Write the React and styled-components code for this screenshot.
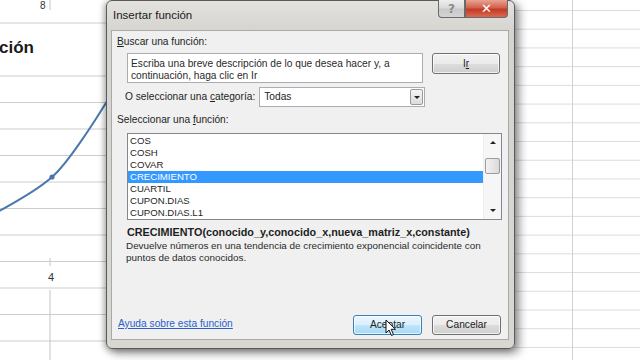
import React from 'react';
import styled, { createGlobalStyle } from 'styled-components';

const GlobalStyle = createGlobalStyle`
  html, body {
    margin: 0;
    padding: 0;
  }
  body {
    width: 640px;
    height: 360px;
    overflow: hidden;
    background: #fff;
    font-family: "Liberation Sans", Arial, sans-serif;
    color: #1e1e1e;
  }
`;

const Screen = styled.div`
  position: relative;
  display: flex;
  width: 640px;
  height: 360px;
  overflow: hidden;
  background: #fff;
`;

const ChartArea = styled.div`
  flex: none;
  width: 330px;
  height: 360px;
`;

const Cells = styled.div`
  flex: 1;
  height: 360px;
  background-image: linear-gradient(to right, #d2d2d2 1px, transparent 1px),
    linear-gradient(#dcdcdc 1px, transparent 1px);
  background-size: 1px 100%, 100% 18.72px;
  background-position: 242px 0, 0 10px;
  background-repeat: no-repeat, repeat;
`;

/* dialog */

const Dialog = styled.div`
  position: absolute;
  left: 106px;
  top: 0;
  width: 409px;
  height: 349px;
  box-sizing: border-box;
  display: flex;
  flex-direction: column;
  padding: 0 5px 8px 4px;
  border: 1px solid #5a5a5a;
  border-radius: 6px;
  background: linear-gradient(#e4e2de, #d6d4cf 30px, #d9d7d2);
  box-shadow: 4px 4px 10px rgba(0, 0, 0, 0.45), -2px 1px 6px rgba(0, 0, 0, 0.28);
`;

const TitleBar = styled.div`
  display: flex;
  align-items: flex-start;
  height: 29px;
  padding-left: 2px;
`;

const Title = styled.div`
  flex: 1;
  padding-top: 7px;
  font-size: 11.5px;
  line-height: 14px;
  color: #1a1a1a;
`;

const CaptionButton = styled.div`
  display: flex;
  align-items: center;
  justify-content: center;
  width: ${(p) => p.$w}px;
  height: 18px;
  margin-top: -1px;
  box-sizing: border-box;
  border: 1px solid #6a6a6a;
  border-top: none;
  border-radius: ${(p) => (p.$close ? '0 0 4px 0' : '0 0 0 4px')};
  background: ${(p) =>
    p.$close
      ? 'linear-gradient(#e9a393, #d2614d 45%, #c43a25 55%, #d86a52)'
      : 'linear-gradient(#eeeeee, #dadada 45%, #c9c9c9 55%, #d4d4d4)'};
  color: ${(p) => (p.$close ? '#fff' : '#8a8a8a')};
  font-size: ${(p) => (p.$close ? 13 : 12)}px;
  font-weight: bold;
  line-height: 1;
  font-family: "DejaVu Sans", sans-serif;
  &:last-child {
    margin-right: 1px;
  }
`;

const Panel = styled.div`
  flex: 1;
  display: flex;
  flex-direction: column;
  border: 1px solid #a9a9a9;
  background: #f0f0f0;
  padding: 0 7px 4px 0;
  font-size: 10.2px;
  line-height: 12px;
`;

const Label = styled.div`
  margin: ${(p) => p.$top}px 0 0 ${(p) => p.$left}px;
  height: 12px;
  white-space: nowrap;
`;

const Key = styled.span`
  text-decoration: underline;
`;

const SearchRow = styled.div`
  display: flex;
  align-items: flex-start;
  gap: 9px;
  margin: 5px 0 0 15px;
`;

const SearchBox = styled.div`
  width: 296px;
  height: 30px;
  box-sizing: border-box;
  padding: 4px 3px;
  border: 1px solid #abadb3;
  background: #fff;
  color: #2a2a2a;
`;

const Button = styled.div`
  position: relative;
  display: flex;
  align-items: center;
  justify-content: center;
  width: ${(p) => p.$w || 69}px;
  height: ${(p) => p.$h || 20}px;
  box-sizing: border-box;
  border: 1px solid ${(p) => (p.$default ? '#3c7fb1' : '#707070')};
  border-radius: 3px;
  background: ${(p) =>
    p.$default
      ? 'linear-gradient(#eaf6fd, #d9f0fc 50%, #bee6fd 50%, #a7d9f5)'
      : 'linear-gradient(#f2f2f2, #ebebeb 50%, #dddddd 50%, #cfcfcf)'};
  box-shadow: inset 0 0 0 1px rgba(255, 255, 255, 0.7);
  color: #1e1e1e;
`;

const CategoryRow = styled.div`
  display: flex;
  align-items: center;
  gap: 4px;
  margin: 4px 0 0 13px;
`;

const Select = styled.div`
  display: flex;
  align-items: center;
  width: 166px;
  height: 20px;
  box-sizing: border-box;
  padding: 0 1px 0 4px;
  border: 1px solid #abadb3;
  background: #fff;
`;

const SelectValue = styled.span`
  flex: 1;
`;

const DropButton = styled.div`
  display: flex;
  align-items: center;
  justify-content: center;
  width: 13px;
  height: 16px;
  box-sizing: border-box;
  border: 1px solid #9a9a9a;
  border-radius: 2px;
  background: linear-gradient(#f4f4f4, #dcdcdc);
`;

const Arrow = styled.span`
  width: 0;
  height: 0;
  border-left: 3px solid transparent;
  border-right: 3px solid transparent;
  ${(p) => (p.$up ? 'border-bottom' : 'border-top')}: 3px solid #222;
`;

const ListBox = styled.div`
  display: flex;
  width: 375px;
  height: 87px;
  box-sizing: border-box;
  margin: 7px 0 0 15px;
  border: 1px solid #828790;
  background: #fff;
`;

const Items = styled.div`
  flex: 1;
  padding-top: 1px;
  font-size: 9.6px;
`;

const Item = styled.div`
  height: 12px;
  line-height: 12px;
  padding-left: 2px;
  background: ${(p) => (p.$selected ? '#3399ff' : 'transparent')};
  color: ${(p) => (p.$selected ? '#fff' : '#1e1e1e')};
`;

const ScrollBar = styled.div`
  display: flex;
  flex-direction: column;
  width: 17px;
  background: #f6f6f6;
  border-left: 1px solid #eeeeee;
`;

const ScrollArrow = styled.div`
  display: flex;
  align-items: center;
  justify-content: center;
  height: 17px;
`;

const Track = styled.div`
  flex: 1;
  padding-top: ${(p) => p.$offset}px;
`;

const Thumb = styled.div`
  height: 14px;
  margin: 0 1px;
  border: 1px solid #9c9c9c;
  border-radius: 2px;
  background: linear-gradient(to right, #f2f2f2, #dadada);
`;

const Syntax = styled.div`
  margin: 6px 0 0 15px;
  font-size: 10.8px;
  font-weight: bold;
  white-space: nowrap;
`;

const Description = styled.div`
  margin: 2px 0 0 14px;
  color: #2a2a2a;
  font-size: 9.9px;
  white-space: nowrap;
`;

const Footer = styled.div`
  display: flex;
  align-items: center;
  gap: 10px;
  margin-top: auto;
  padding-left: 6px;
`;

const HelpLink = styled.a`
  flex: 1;
  color: #2a5fc9;
  text-decoration: underline;
  margin-top: -2px;
`;

const Cursor = styled.svg`
  position: absolute;
  left: 31px;
  top: 3px;
`;

const functions = ['COS', 'COSH', 'COVAR', 'CRECIMIENTO', 'CUARTIL', 'CUPON.DIAS', 'CUPON.DIAS.L1'];

const gridY = [23, 76, 102.5, 129, 155.5, 182, 208.5, 235, 261.5, 288, 314.5, 341];

function Chart() {
  return (
    <svg width="330" height="360" viewBox="0 0 330 360">
      {gridY.map((y) => (
        <line key={y} x1="0" x2="330" y1={y} y2={y} stroke="#cdcdcd" strokeWidth="1.2" />
      ))}
      <line x1="50" x2="50" y1="0" y2="10" stroke="#c4c4c4" />
      <line x1="50" x2="50" y1="258" y2="266" stroke="#c4c4c4" />
      <line x1="50" x2="50" y1="290" y2="360" stroke="#c4c4c4" />
      <text x="40" y="9" fontFamily="Liberation Sans, Arial, sans-serif" fontSize="10" fill="#333">8</text>
      <text x="48" y="281" fontFamily="Liberation Sans, Arial, sans-serif" fontSize="11" fill="#333">4</text>
      <text x="-1" y="53" fontFamily="Liberation Sans, Arial, sans-serif" fontSize="17" fontWeight="bold" fill="#1a1a1a">ción</text>
      <path
        d="M -10 216 C 20 200, 40 188, 52 177 C 65 166, 90 130, 115 88"
        fill="none"
        stroke="#4a78ad"
        strokeWidth="2"
      />
      <circle cx="52" cy="177" r="2.6" fill="#4a78ad" />
    </svg>
  );
}

export default function App() {
  return (
    <Screen>
      <GlobalStyle />
      <ChartArea>
        <Chart />
      </ChartArea>
      <Cells />

      <Dialog>
        <TitleBar>
          <Title>Insertar función</Title>
          <CaptionButton $w={27}>?</CaptionButton>
          <CaptionButton $w={43} $close>✕</CaptionButton>
        </TitleBar>

        <Panel>
          <Label $top={5} $left={5}>
            <Key>B</Key>uscar una función:
          </Label>

          <SearchRow>
            <SearchBox>
              Escriba una breve descripción de lo que desea hacer y, a continuación, haga clic en Ir
            </SearchBox>
            <Button $w={68} $h={21}>
              I<Key>r</Key>
            </Button>
          </SearchRow>

          <CategoryRow>
            <span>
              O seleccionar una <Key>c</Key>ategoría:
            </span>
            <Select>
              <SelectValue>Todas</SelectValue>
              <DropButton>
                <Arrow />
              </DropButton>
            </Select>
          </CategoryRow>

          <Label $top={7} $left={5}>
            Seleccionar una <Key>f</Key>unción:
          </Label>

          <ListBox>
            <Items>
              {functions.map((f) => (
                <Item key={f} $selected={f === 'CRECIMIENTO'}>
                  {f}
                </Item>
              ))}
            </Items>
            <ScrollBar>
              <ScrollArrow>
                <Arrow $up />
              </ScrollArrow>
              <Track $offset={7}>
                <Thumb />
              </Track>
              <ScrollArrow>
                <Arrow />
              </ScrollArrow>
            </ScrollBar>
          </ListBox>

          <Syntax>CRECIMIENTO(conocido_y,conocido_x,nueva_matriz_x,constante)</Syntax>
          <Description>
            Devuelve números en una tendencia de crecimiento exponencial coincidente con
            <br />
            puntos de datos conocidos.
          </Description>

          <Footer>
            <HelpLink href="#">Ayuda sobre esta función</HelpLink>
            <Button $default>
              Aceptar
              <Cursor width="12" height="18" viewBox="0 0 12 18">
                <path
                  d="M1 1 L1 14 L4 11 L6.5 16.5 L8.5 15.6 L6.2 10.3 L10.5 10.3 Z"
                  fill="#fff"
                  stroke="#111"
                  strokeWidth="1"
                  strokeLinejoin="round"
                />
              </Cursor>
            </Button>
            <Button>Cancelar</Button>
          </Footer>
        </Panel>
      </Dialog>
    </Screen>
  );
}
